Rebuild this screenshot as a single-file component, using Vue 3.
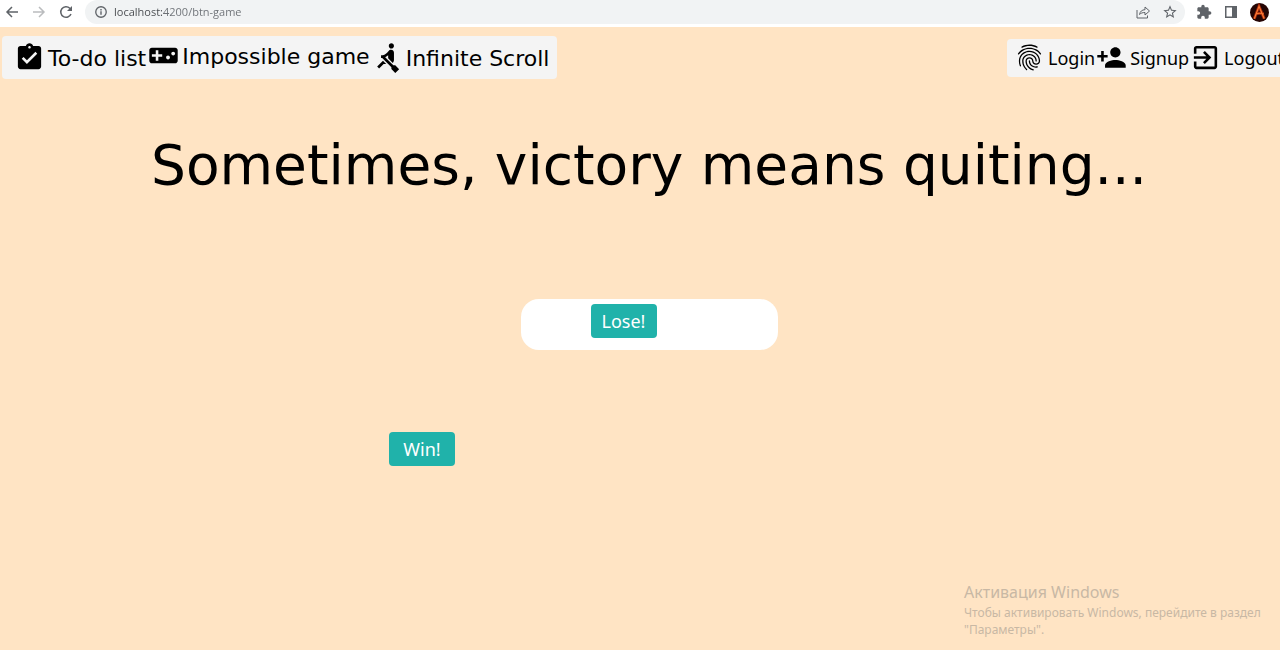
<script setup>
import { ref } from 'vue'

const address = ref('localhost:4200/btn-game')

const pages = [
  {
    label: 'To-do list',
    path: 'M19 3h-4.18C14.4 1.84 13.3 1 12 1c-1.3 0-2.4.84-2.82 2H5c-1.1 0-2 .9-2 2v14c0 1.1.9 2 2 2h14c1.1 0 2-.9 2-2V5c0-1.1-.9-2-2-2zm-7 0c.55 0 1 .45 1 1s-.45 1-1 1-1-.45-1-1 .45-1 1-1zm-2 14l-4-4 1.41-1.41L10 14.17l6.59-6.59L18 9l-8 8z',
  },
  {
    label: 'Impossible game',
    raised: true,
    path: 'M21 6H3c-1.1 0-2 .9-2 2v8c0 1.1.9 2 2 2h18c1.1 0 2-.9 2-2V8c0-1.1-.9-2-2-2zm-10 7H8v3H6v-3H3v-2h3V8h2v3h3v2zm4.5 2c-.83 0-1.5-.67-1.5-1.5s.67-1.5 1.5-1.5 1.5.67 1.5 1.5-.67 1.5-1.5 1.5zm4-3c-.83 0-1.5-.67-1.5-1.5S18.67 9 19.5 9s1.5.67 1.5 1.5-.67 1.5-1.5 1.5z',
  },
  {
    label: 'Infinite Scroll',
    path: 'M8.5 14.5L4 19l1.5 1.5L9 17h2l-2.5-2.5zM15 1c-1.1 0-2 .9-2 2s.9 2 2 2 2-.9 2-2-.9-2-2-2zm6 20.01L18 24l-2.99-3.01V19.5l-7.1-7.09c-.31.05-.61.07-.91.07v-2.16c1.66.03 3.61-.87 4.67-2.04l1.4-1.55c.19-.21.43-.38.69-.5.29-.14.62-.23.96-.23h.03C15.99 6.01 17 7.02 17 8.26v5.75c0 .84-.35 1.61-.92 2.16l-3.58-3.58v-2.27c-.63.52-1.43 1.02-2.29 1.39L16.5 18H18l3 3.01z',
  },
]

const account = [
  {
    label: 'Login',
    path: 'M17.81 4.47c-.08 0-.16-.02-.23-.06C15.66 3.42 14 3 12.01 3c-1.98 0-3.86.47-5.57 1.41-.24.13-.54.04-.68-.2-.13-.24-.04-.55.2-.68C7.82 2.52 9.86 2 12.01 2c2.13 0 3.99.47 6.03 1.52.25.13.34.43.21.67-.09.18-.26.28-.44.28zM3.5 9.72c-.1 0-.2-.03-.29-.09-.23-.16-.28-.47-.12-.7.99-1.4 2.25-2.5 3.75-3.27C9.98 4.04 14 4.03 17.15 5.65c1.5.77 2.76 1.86 3.75 3.25.16.22.11.54-.12.7-.23.16-.54.11-.7-.12-.9-1.26-2.04-2.25-3.39-2.94-2.87-1.47-6.54-1.47-9.4.01-1.36.7-2.5 1.7-3.4 2.96-.08.14-.23.21-.39.21zm6.25 12.07c-.13 0-.26-.05-.35-.15-.87-.87-1.34-1.43-2.01-2.64-.69-1.23-1.05-2.73-1.05-4.34 0-2.97 2.54-5.39 5.66-5.39s5.66 2.42 5.66 5.39c0 .28-.22.5-.5.5s-.5-.22-.5-.5c0-2.42-2.09-4.39-4.66-4.39-2.57 0-4.66 1.97-4.66 4.39 0 1.44.32 2.77.93 3.85.64 1.15 1.08 1.64 1.85 2.42.19.2.19.51 0 .71-.11.1-.24.15-.37.15zm7.17-1.85c-1.19 0-2.24-.3-3.1-.89-1.49-1.01-2.38-2.65-2.38-4.39 0-.28.22-.5.5-.5s.5.22.5.5c0 1.41.72 2.74 1.94 3.56.71.48 1.54.71 2.54.71.24 0 .64-.03 1.04-.1.27-.05.53.13.58.41.05.27-.13.53-.41.58-.57.11-1.07.12-1.21.12zM14.91 22c-.04 0-.09-.01-.13-.02-1.59-.44-2.63-1.03-3.72-2.1-1.4-1.39-2.17-3.24-2.17-5.22 0-1.62 1.38-2.94 3.08-2.94 1.7 0 3.08 1.32 3.08 2.94 0 1.07.93 1.94 2.08 1.94s2.08-.87 2.08-1.94c0-3.77-3.25-6.83-7.25-6.83-2.84 0-5.44 1.58-6.61 4.03-.39.81-.59 1.76-.59 2.8 0 .78.07 2.01.67 3.61.1.26-.03.55-.29.64-.26.1-.55-.04-.64-.29-.49-1.31-.73-2.61-.73-3.96 0-1.2.23-2.29.68-3.24 1.33-2.79 4.28-4.6 7.51-4.6 4.55 0 8.25 3.51 8.25 7.83 0 1.62-1.38 2.94-3.08 2.94s-3.08-1.32-3.08-2.94c0-1.07-.93-1.94-2.08-1.94s-2.08.87-2.08 1.94c0 1.71.66 3.31 1.87 4.51.95.94 1.86 1.46 3.27 1.85.27.07.42.35.35.61-.05.23-.26.38-.47.38z',
  },
  {
    label: 'Signup',
    path: 'M15 12c2.21 0 4-1.79 4-4s-1.79-4-4-4-4 1.79-4 4 1.79 4 4 4zm-9-2V7H4v3H1v2h3v3h2v-3h3v-2H6zm9 4c-2.67 0-8 1.34-8 4v2h16v-2c0-2.66-5.33-4-8-4z',
  },
  {
    label: 'Logout',
    path: 'M10.09 15.59L11.5 17l5-5-5-5-1.41 1.41L12.67 11H3v2h9.67l-2.58 2.59zM19 3H5c-1.11 0-2 .9-2 2v4h2V5h14v14H5v-4H3v4c0 1.1.89 2 2 2h14c1.1 0 2-.9 2-2V5c0-1.1-.9-2-2-2z',
  },
]
</script>

<template>
  <div class="window">
    <div class="toolbar">
      <button class="tool" aria-label="Back">
        <svg viewBox="0 0 16 16"><path d="M14 8H3M8 3L3 8l5 5" class="line" /></svg>
      </button>
      <button class="tool faded" aria-label="Forward">
        <svg viewBox="0 0 16 16"><path d="M2 8h11M8 3l5 5-5 5" class="line" /></svg>
      </button>
      <button class="tool" aria-label="Reload">
        <svg viewBox="0 0 16 16"><path d="M13 10a5.300 5.300 0 1 1-1.200-5.800L13.300 5.700" class="line" /><path d="M14 2v5H9z" /></svg>
      </button>
      <div class="omnibox">
        <svg class="info" viewBox="0 0 16 16"><circle cx="8" cy="8" r="6" class="line" /><path d="M7.200 7.200h1.600v4H7.200zM7.200 4.600h1.600v1.600H7.200z" /></svg>
        <input v-model="address" class="address" type="text" aria-label="Address" />
        <button class="tool" aria-label="Share">
          <svg viewBox="0 0 16 16"><path d="M2 6v8h10.500v-2.500M4.500 10.500c.6-3.200 2.500-4.700 5.500-4.800V3l4.500 4-4.500 4V8.500c-2.500 0-4.200.6-5.500 2z" class="thin" /></svg>
        </button>
        <button class="tool" aria-label="Bookmark">
          <svg viewBox="0 0 24 24"><path d="M22 9.240l-7.190-.62L12 2 9.190 8.630 2 9.240l5.460 4.730L5.820 21 12 17.270 18.180 21l-1.630-7.030L22 9.240zM12 15.400l-3.760 2.270 1-4.280-3.320-2.880 4.380-.38L12 6.100l1.710 4.040 4.380.38-3.320 2.880 1 4.280L12 15.400z" /></svg>
        </button>
      </div>
      <button class="tool" aria-label="Extensions">
        <svg viewBox="0 0 24 24"><path d="M20.500 11H19V7c0-1.100-.9-2-2-2h-4V3.500C13 2.120 11.880 1 10.500 1S8 2.120 8 3.500V5H4c-1.100 0-1.990.9-1.990 2v3.800H3.500c1.490 0 2.700 1.210 2.700 2.700s-1.210 2.700-2.700 2.700H2V20c0 1.100.9 2 2 2h3.800v-1.500c0-1.490 1.210-2.700 2.700-2.700 1.490 0 2.700 1.210 2.700 2.700V22H17c1.100 0 2-.9 2-2v-4h1.500c1.380 0 2.500-1.120 2.500-2.500S21.880 11 20.500 11z" /></svg>
      </button>
      <button class="tool" aria-label="Side panel">
        <svg viewBox="0 0 16 16"><path fill-rule="evenodd" d="M2 2h12v12H2zM3.500 3.500v9H9v-9z" /></svg>
      </button>
      <button class="avatar" aria-label="Profile">
        <svg viewBox="0 0 20 20">
          <circle cx="10" cy="10" r="10" fill="#250504" />
          <path d="M4.500 16.500L9.500 3.500l5.500 13M5.500 12c3-1.500 6-1.500 9-.5" fill="none" stroke="#a52a0d" stroke-width="3" />
          <path d="M4.500 16.500L9.500 3.500l5.500 13M5.500 12c3-1.500 6-1.500 9-.5" fill="none" stroke="#fb7a35" stroke-width="1.200" />
        </svg>
      </button>
    </div>

    <div class="page">
      <header class="bar">
        <nav class="menu pages" aria-label="Pages">
          <a v-for="item in pages" :key="item.label" href="#" class="entry" :class="{ raised: item.raised }">
            <svg class="icon" viewBox="0 0 24 24"><path :d="item.path" /></svg>
            <span>{{ item.label }}</span>
          </a>
        </nav>
        <nav class="menu account" aria-label="Account">
          <a v-for="item in account" :key="item.label" href="#" class="entry">
            <svg class="icon" viewBox="0 0 24 24"><path :d="item.path" /></svg>
            <span>{{ item.label }}</span>
          </a>
        </nav>
      </header>

      <main class="game">
        <h1>Sometimes, victory means quiting...</h1>
        <div class="tray">
          <button class="choice">Lose!</button>
        </div>
        <button class="choice win">Win!</button>
      </main>
    </div>

    <aside class="notice">
      <p class="notice-title">Активация Windows</p>
      <p>Чтобы активировать Windows, перейдите в раздел<br />"Параметры".</p>
    </aside>
  </div>
</template>

<style>
body {
  margin: 0;
  background: #ffe4c4;
}
</style>

<style scoped>
.window {
  position: relative;
  display: flex;
  flex-direction: column;
  min-height: 100vh;
  overflow: hidden;
  font-family: "Noto Sans", "Open Sans", sans-serif;
  color: #000;
}

button {
  border: 0;
  font: inherit;
  cursor: pointer;
}

svg {
  display: block;
  fill: currentColor;
}

.line,
.thin {
  fill: none;
  stroke: currentColor;
  stroke-width: 1.5;
}

.thin {
  stroke-width: 1;
}

.toolbar {
  display: flex;
  align-items: center;
  gap: 11px;
  height: 24px;
  padding: 0 11px 3px 4px;
  background: #fff;
  color: #5f6368;
}

.tool {
  flex: none;
  padding: 0;
  background: none;
  color: inherit;
}

.tool svg {
  width: 16px;
  height: 16px;
}

.tool.faded {
  color: #babcbe;
}

.omnibox {
  display: flex;
  flex: 1;
  align-items: center;
  gap: 11px;
  height: 24px;
  padding: 0 7px 0 9px;
  border-radius: 12px;
  background: #f1f3f4;
}

.info {
  flex: none;
  width: 14px;
  height: 14px;
}

.address {
  flex: 1;
  min-width: 0;
  margin-left: -5px;
  padding: 0;
  border: 0;
  outline: 0;
  font: 11px/16px "Open Sans", "Noto Sans", sans-serif;
  color: transparent;
  background: linear-gradient(90deg, #45484c 50px, #6c7075 50px);
  background-clip: text;
  -webkit-background-clip: text;
}

.avatar {
  flex: none;
  padding: 0;
  background: none;
}

.avatar svg {
  width: 19px;
  height: 19px;
}

.page {
  flex: 1;
  background: #ffe4c4;
}

.bar {
  display: flex;
  align-items: center;
  justify-content: space-between;
  padding: 9px 0 0 2px;
}

.menu {
  display: flex;
  flex: none;
  align-items: center;
  border-radius: 4px;
  background: #f4f4f4;
}

.pages {
  gap: 2px;
  height: 43px;
  padding: 0 8px 0 12px;
  font: 22px/31px "DejaVu Sans", Verdana, sans-serif;
}

.account {
  gap: 1px;
  height: 38px;
  margin-right: -14px;
  padding: 0 10px 0 7px;
  font-size: 18px;
  line-height: 31px;
}

.entry {
  display: flex;
  align-items: center;
  gap: 3px;
  color: inherit;
  text-decoration: none;
}

.entry span {
  padding-top: 2px;
}

.raised {
  padding-bottom: 4px;
}

.icon {
  flex: none;
  width: 31px;
  height: 31px;
}

.game {
  position: relative;
  display: flex;
  flex-direction: column;
  align-items: center;
  padding-left: 18px;
}

h1 {
  margin: 52px 0 0;
  font: 400 55px/68px "DejaVu Sans", Verdana, sans-serif;
  white-space: nowrap;
}

.tray {
  display: flex;
  box-sizing: border-box;
  width: 257px;
  margin-top: 100px;
  padding: 5px 0 12px 70px;
  border-radius: 18px;
  background: #fff;
}

.choice {
  width: 66px;
  height: 34px;
  padding: 0;
  border-radius: 4px;
  background: #20b2aa;
  color: #fff;
  font-size: 18px;
  line-height: 24px;
}

.win {
  position: absolute;
  top: 353px;
  left: 389px;
}

.notice {
  position: absolute;
  right: 16px;
  bottom: 12px;
  width: 300px;
  font: 12px/17px "Noto Sans", "Open Sans", sans-serif;
  color: #c8b8a4;
}

.notice p {
  margin: 0;
}

.notice .notice-title {
  font-size: 16px;
  line-height: 24px;
}
</style>
